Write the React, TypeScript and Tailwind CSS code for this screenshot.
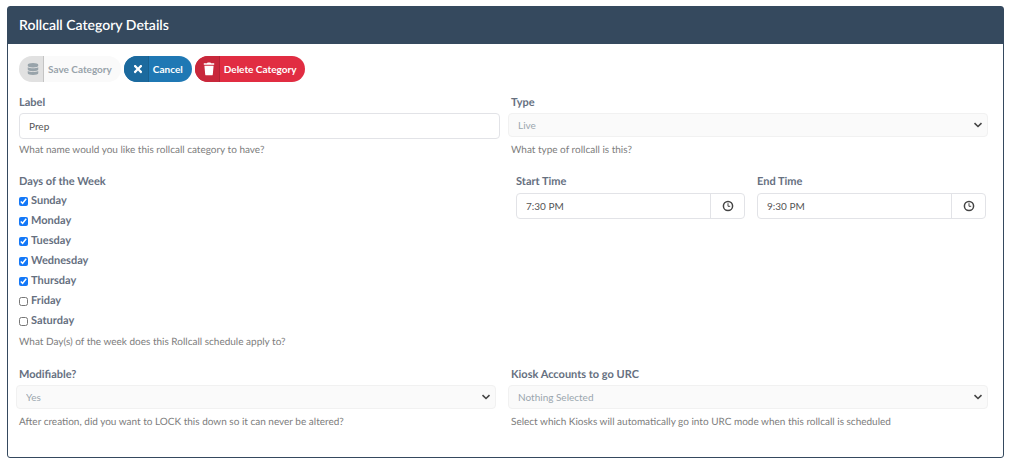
import type { ReactNode } from "react";
import { useState } from "react";
import { FaDatabase, FaTimes } from "react-icons/fa";

const DAYS = [
  "Sunday",
  "Monday",
  "Tuesday",
  "Wednesday",
  "Thursday",
  "Friday",
  "Saturday",
];

const labelClass = "block text-[11px] leading-[18px] font-bold text-[#66707f]";
const helpClass = "text-[10px] leading-4 text-[#7d7d7d]";

function TrashIcon() {
  return (
    <svg viewBox="0 0 12 14" fill="currentColor" className="h-3.5 w-3">
      <path d="M4 1.2 4.6.4h2.8l.6.8h3.2v1.6H.8V1.2zM1.4 3.8h9.2l-.8 8.6a1 1 0 0 1-1 .9H3.2a1 1 0 0 1-1-.9z" />
    </svg>
  );
}

function ClockIcon() {
  return (
    <svg
      viewBox="0 0 12 12"
      fill="none"
      stroke="currentColor"
      className="size-3"
    >
      <circle cx="6" cy="6" r="4.6" strokeWidth="1.5" />
      <path d="M6 3.2v3.1h2.2" strokeWidth="1" />
    </svg>
  );
}

function ChevronIcon() {
  return (
    <svg
      viewBox="0 0 10 10"
      fill="none"
      stroke="currentColor"
      strokeWidth="1.6"
      className="pointer-events-none absolute top-[7px] right-[5px] size-2.5"
    >
      <path d="m1.5 3.2 3.5 3.3 3.5-3.3" />
    </svg>
  );
}

type PillButtonProps = {
  icon: ReactNode;
  children: ReactNode;
  className: string;
  iconClassName: string;
  disabled?: boolean;
};

function PillButton({
  icon,
  children,
  className,
  iconClassName,
  disabled,
}: PillButtonProps) {
  return (
    <button
      type="button"
      disabled={disabled}
      className={`flex h-[26px] items-stretch overflow-hidden rounded-full text-[10px] leading-4 font-bold ${className}`}
    >
      <span
        className={`flex w-[25px] items-center justify-center border-r pl-1 ${iconClassName}`}
      >
        {icon}
      </span>
      <span className="self-center pr-[9px] pl-1">{children}</span>
    </button>
  );
}

type SelectFieldProps = {
  id: string;
  label: string;
  value: string;
  help: string;
};

function SelectField({ id, label, value, help }: SelectFieldProps) {
  return (
    <div>
      <label htmlFor={id} className={`${labelClass} pl-[3px]`}>
        {label}
      </label>
      <div className="relative mt-px h-[26px] text-[#444]">
        <select
          id={id}
          disabled
          defaultValue={value}
          className="block h-6 w-full appearance-none rounded-sm border border-[#f1f1f1] bg-[#fafafa] px-[9px] text-[10px] text-[#9ba6ae] disabled:opacity-100"
        >
          <option>{value}</option>
        </select>
        <ChevronIcon />
      </div>
      <p className={`${helpClass} mt-[3px] pl-[3px]`}>{help}</p>
    </div>
  );
}

type TimeFieldProps = { id: string; label: string; value: string };

function TimeField({ id, label, value }: TimeFieldProps) {
  return (
    <div className="min-w-0 flex-1">
      <label htmlFor={id} className={labelClass}>
        {label}
      </label>
      <div className="mt-0.5 flex h-[26px] rounded-sm border border-[#e2e3e7]">
        <input
          id={id}
          type="text"
          defaultValue={value}
          className="min-w-0 flex-1 px-[9px] text-[10px] text-[#555] outline-none"
        />
        <button
          type="button"
          aria-label={`Pick ${label}`}
          className="flex w-[34px] items-center justify-center border-l border-[#e2e3e7] text-[#444]"
        >
          <ClockIcon />
        </button>
      </div>
    </div>
  );
}

export default function App() {
  const [selected, setSelected] = useState(DAYS.slice(0, 5));

  const toggle = (day: string) =>
    setSelected((s) =>
      s.includes(day) ? s.filter((d) => d !== day) : [...s, day],
    );

  return (
    <main className="bg-white pt-1.5 pr-[9px] pb-2 pl-[7px] font-['Lato',sans-serif] [text-rendering:geometricPrecision]">
      <section className="rounded-[3px] border border-[#35495e] bg-white">
        <h1 className="bg-[#35495e] px-[11px] pt-2 pb-[9px] text-[14px] leading-5 font-semibold text-white">
          Rollcall Category Details
        </h1>

        <form className="pt-3 pr-[15px] pb-[27px] pl-2">
          <div className="flex gap-[3px] pl-[3px]">
            <PillButton
              disabled
              icon={<FaDatabase className="size-3" />}
              className="bg-[#fafafa] text-[#98a3aa]"
              iconClassName="border-[#c4c4c4] bg-[#e1e1e1]"
            >
              Save Category
            </PillButton>
            <PillButton
              icon={<FaTimes className="size-3" />}
              className="bg-[#1f78b4] text-white"
              iconClassName="border-[#19618f] bg-[#1c6a9e]"
            >
              Cancel
            </PillButton>
            <PillButton
              icon={<TrashIcon />}
              className="bg-[#e12d42] text-white"
              iconClassName="border-[#b32234] bg-[#c8283b]"
            >
              Delete Category
            </PillButton>
          </div>

          <div className="mt-3 grid grid-cols-2 gap-x-3">
            <div className="-mr-1 ml-[3px]">
              <label htmlFor="label" className={labelClass}>
                Label
              </label>
              <input
                id="label"
                type="text"
                defaultValue="Prep"
                className="mt-px block h-[26px] w-full rounded-sm border border-[#e2e3e7] px-[9px] text-[10px] text-[#555] outline-none"
              />
              <p className={`${helpClass} mt-[3px]`}>
                What name would you like this rollcall category to have?
              </p>
            </div>
            <SelectField
              id="type"
              label="Type"
              value="Live"
              help="What type of rollcall is this?"
            />
          </div>

          <div className="mt-[15px] grid grid-cols-2 gap-x-3">
            <fieldset className="pl-[3px]">
              <legend className={labelClass}>Days of the Week</legend>
              {DAYS.map((day) => (
                <label
                  key={day}
                  className="flex h-5 w-fit items-center gap-[3px] text-[11px] font-bold text-[#66707f]"
                >
                  <input
                    type="checkbox"
                    checked={selected.includes(day)}
                    onChange={() => toggle(day)}
                    className="size-[9px] accent-[#1478f7]"
                  />
                  {day}
                </label>
              ))}
              <p className={`${helpClass} mt-[3px]`}>
                What Day(s) of the week does this Rollcall schedule apply to?
              </p>
            </fieldset>
            <div className="flex gap-3 pr-0.5 pl-2">
              <TimeField id="start" label="Start Time" value="7:30 PM" />
              <TimeField id="end" label="End Time" value="9:30 PM" />
            </div>
          </div>

          <div className="mt-4 grid grid-cols-2 gap-x-3">
            <SelectField
              id="modifiable"
              label="Modifiable?"
              value="Yes"
              help="After creation, did you want to LOCK this down so it can never be altered?"
            />
            <SelectField
              id="kiosks"
              label="Kiosk Accounts to go URC"
              value="Nothing Selected"
              help="Select which Kiosks will automatically go into URC mode when this rollcall is scheduled"
            />
          </div>
        </form>
      </section>
    </main>
  );
}
